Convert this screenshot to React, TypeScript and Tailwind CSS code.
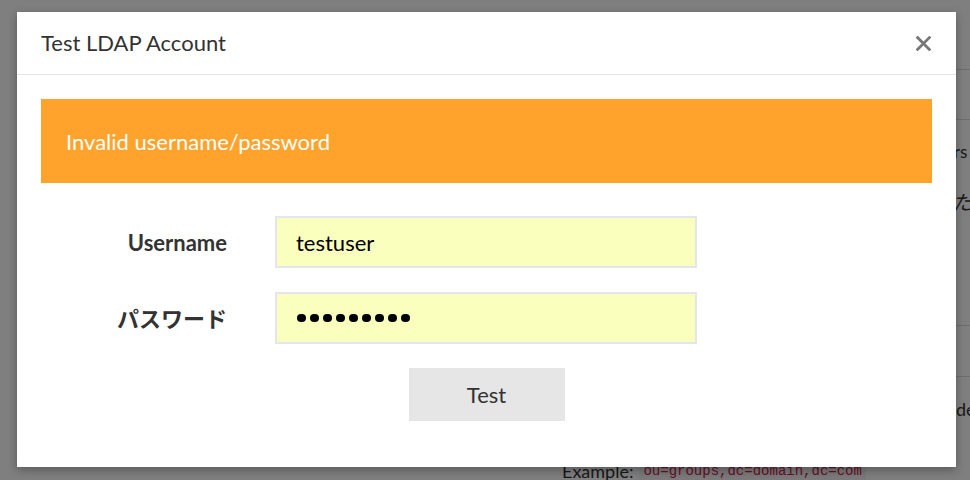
import React from 'react'

const font = "font-['Lato','Noto_Sans_CJK_JP',sans-serif]"

function BackgroundPage() {
  // the settings page that sits behind the dimmed overlay
  return (
    <div className="absolute inset-0 bg-white overflow-hidden">
      <div className="ml-[540px] w-[520px] text-[#333]">
        <div className="h-[70px] border-b border-[#dddddd]" />
        <div className="h-[50px] border-b border-[#dddddd]" />
        <div className="h-[206px] border-b border-[#dddddd]">
          <p className="pl-[388px] pt-[20px] text-[17px] leading-[24px]">users</p>
          <p className="pl-[352px] pt-[24px] text-[20px] leading-[28px] italic">しました</p>
        </div>
        <div className="h-[51px] border-b border-[#dddddd]" />
        <div>
          <p className="pl-[391px] pt-[20px] text-[18px] leading-[24px]">mode</p>
          <p className="pl-[22px] pt-[36px] text-[18px] leading-[24px] flex items-center gap-[6px]">
            <span>Example:</span>
            <code className="font-['Liberation_Mono',monospace] text-[14px] text-[#c7254e] bg-[#f9f2f4] px-[4px] py-[2px]">
              ou=groups,dc=domain,dc=com
            </code>
          </p>
        </div>
      </div>
    </div>
  )
}

export default function App() {
  return (
    <div className={`relative w-[970px] h-[480px] overflow-hidden ${font}`}>
      <BackgroundPage />
      <div className="absolute inset-0 bg-black/50" />
      <div className="absolute inset-0 pl-[17px] pt-[12px]">
        <div className="w-[939px] h-[455px] bg-white shadow-[0_3px_9px_rgba(0,0,0,0.3)]">
          <div className="h-[63px] border-b border-[#e5e5e5] flex items-center justify-between pl-[24px] pr-[25px]">
            <h4 className="text-[22px] text-[#333] leading-none">Test LDAP Account</h4>
            <button className="w-[15px] h-[15px] text-[#777]">
              <svg viewBox="0 0 14 14" width="15" height="15">
                <path d="M1.5 1.5 L12.5 12.5 M12.5 1.5 L1.5 12.5" stroke="currentColor" strokeWidth="2.6" strokeLinecap="square" />
              </svg>
            </button>
          </div>
          <div className="px-[24px] pt-[24px]">
            <div className="h-[84px] bg-[#ffa32c] text-white text-[22px] flex items-center pl-[25px]">
              Invalid username/password
            </div>
            <div className="mt-[33px] flex flex-col gap-[24px]">
              <div className="flex items-center">
                <label className="w-[186px] text-right font-bold text-[22px] text-[#333]">Username</label>
                <input
                  readOnly
                  value="testuser"
                  className="ml-[48px] w-[422px] h-[52px] bg-[#faffbd] border-2 border-[#e3e6ee] px-[19px] text-[22px] text-black outline-none"
                />
              </div>
              <div className="flex items-center">
                <label className="w-[186px] text-right font-bold text-[22px] text-[#333]">パスワード</label>
                <div className="ml-[48px] w-[422px] h-[52px] bg-[#faffbd] border-2 border-[#e3e6ee] px-[20px] flex items-center gap-[4.5px]">
                  {Array.from({ length: 9 }).map((_, i) => (
                    <span key={i} className="w-[8.5px] h-[8.5px] rounded-full bg-black" />
                  ))}
                </div>
              </div>
            </div>
            <div className="mt-[24px] flex justify-center">
              <button className="w-[156px] h-[53px] bg-[#e6e6e6] text-[22px] text-[#333]">Test</button>
            </div>
          </div>
        </div>
      </div>
    </div>
  )
}
